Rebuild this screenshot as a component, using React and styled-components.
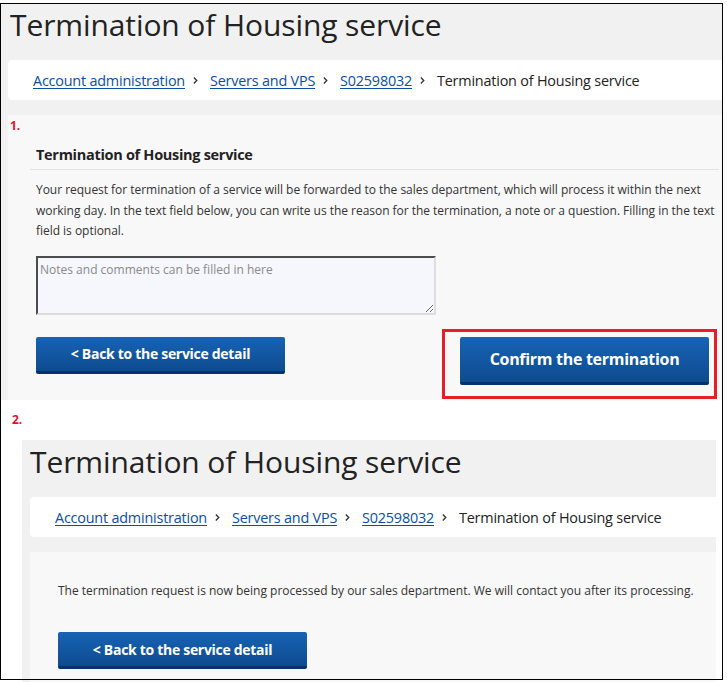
import React from "react";
import styled, { createGlobalStyle } from "styled-components";

const GlobalStyle = createGlobalStyle`
  html, body {
    margin: 0;
    padding: 0;
    background: #fff;
    height: 682px;
    overflow: hidden;
  }
  body {
    font-family: "Open Sans", "Liberation Sans", sans-serif;
    color: #333;
  }
`;

const crumbs = ["Account administration", "Servers and VPS", "S02598032"];

function Breadcrumbs() {
  return (
    <Crumbs>
      {crumbs.map((c) => (
        <React.Fragment key={c}>
          <CrumbLink href="#">{c}</CrumbLink>
          <Chevron viewBox="0 0 6 10">
            <path d="M1 1.5 L4.5 5 L1 8.5" fill="none" stroke="#333" strokeWidth="1.6" />
          </Chevron>
        </React.Fragment>
      ))}
      <CrumbCurrent>Termination of Housing service</CrumbCurrent>
    </Crumbs>
  );
}

export default function App() {
  return (
    <>
      <GlobalStyle />
      <Frame>
        <Panel $top={3} $left={0} $right={0}>
          <Title $indent={2}>Termination of Housing service</Title>
          <Breadcrumbs />
          <Content $height={285}>
            <StepLabel>1.</StepLabel>
            <SectionHead>Termination of Housing service</SectionHead>
            <Paragraph>
              Your request for termination of a service will be forwarded to the sales
              department, which will process it within the next working day. In the text
              field below, you can write us the reason for the termination, a note or a
              question. Filling in the text field is optional.
            </Paragraph>
            <Notes placeholder="Notes and comments can be filled in here" />
            <ButtonRow>
              <BlueButton>&lt; Back to the service detail</BlueButton>
              <Highlight>
                <BlueButton $big>Confirm the termination</BlueButton>
              </Highlight>
            </ButtonRow>
          </Content>
        </Panel>

        <StepTwo>2.</StepTwo>

        <Panel $top={0} $left={22} $right={7}>
          <Title $indent={0}>Termination of Housing service</Title>
          <Breadcrumbs />
          <Content $height={150}>
            <Message>
              The termination request is now being processed by our sales department. We
              will contact you after its processing.
            </Message>
            <BlueButton>&lt; Back to the service detail</BlueButton>
          </Content>
        </Panel>
      </Frame>
    </>
  );
}

const Frame = styled.div`
  position: relative;
  width: 723px;
  height: 677px;
  box-sizing: border-box;

  &::after {
    content: "";
    position: absolute;
    inset: 0;
    border: 1.5px solid #000;
    pointer-events: none;
    z-index: 5;
  }
`;

const Panel = styled.section`
  margin: ${(p) => p.$top}px ${(p) => p.$right}px 0 ${(p) => p.$left}px;
  background: #f1f1f1;
  padding: 0 0 0 8px;
`;

const Title = styled.h1`
  margin: 0;
  padding: 2px 0 0 ${(p) => p.$indent}px;
  height: 57px;
  box-sizing: border-box;
  font-size: 30px;
  font-weight: 400;
  color: #222;
  line-height: 40px;
  letter-spacing: -0.1px;
`;

const Crumbs = styled.nav`
  display: flex;
  align-items: center;
  height: 40px;
  padding-left: 25px;
  background: #fff;
  border-radius: 4px 0 0 4px;
  font-size: 14.4px;
  letter-spacing: -0.2px;
`;

const CrumbLink = styled.a`
  color: #0b4ea2;
  text-decoration: underline;
  text-underline-offset: 2px;
`;

const Chevron = styled.svg`
  width: 5px;
  height: 9px;
  margin: 1px 12px 0 8px;
`;

const CrumbCurrent = styled.span`
  color: #222;
`;

const Content = styled.div`
  position: relative;
  margin-top: 15px;
  height: ${(p) => p.$height}px;
  background: #f8f8f8;
  padding: 30px 4px 0 28px;
  box-sizing: border-box;
`;

const StepLabel = styled.span`
  position: absolute;
  left: 2px;
  top: 2px;
  color: #e8102a;
  font-size: 12px;
  font-weight: 700;
`;

const StepTwo = styled.div`
  padding: 11px 0 0 12px;
  height: 40px;
  box-sizing: border-box;
  color: #e8102a;
  font-size: 12px;
  font-weight: 700;
`;

const SectionHead = styled.h2`
  margin: 0 0 0 -6px;
  padding: 0 0 4px 6px;
  border-bottom: 1px solid #e2e2e2;
  font-size: 14.5px;
  font-weight: 700;
  color: #222;
  letter-spacing: -0.3px;
  line-height: 20px;
`;

const Paragraph = styled.p`
  margin: 10px 0 0 0;
  font-size: 12px;
  line-height: 20.5px;
  color: #333;
  letter-spacing: -0.03px;
`;

const Notes = styled.textarea`
  display: block;
  margin-top: 14px;
  width: 400px;
  height: 59px;
  box-sizing: border-box;
  border: 2px inset #ddd;
  border-top-color: #a0a0a0;
  border-left-color: #a0a0a0;
  background: #f5f7fc;
  font-family: "Open Sans", "Liberation Sans", sans-serif;
  font-size: 12px;
  padding: 3px 2px;
  resize: both;

  &::placeholder {
    color: #8a8a8a;
  }
`;

const ButtonRow = styled.div`
  display: flex;
  justify-content: space-between;
  align-items: flex-start;
  margin-top: 22px;
  padding-right: 2px;
`;

const Highlight = styled.div`
  margin-top: -8px;
  padding: 5px 5px 11px 15px;
  border: 3px solid #e81e25;
`;

const BlueButton = styled.button`
  display: block;
  width: 249px;
  height: ${(p) => (p.$big ? 48 : 37)}px;
  border: none;
  border-bottom: 3px solid #06326a;
  border-radius: 2px;
  background: linear-gradient(#1763b5, #0e4b8f);
  color: #fff;
  font-family: "Open Sans", "Liberation Sans", sans-serif;
  font-size: ${(p) => (p.$big ? 16 : 14)}px;
  font-weight: 700;
  letter-spacing: -0.3px;
  padding: 0;
  cursor: pointer;
`;

const Message = styled.p`
  margin: 0 0 33px 0;
  font-size: 12px;
  line-height: 17px;
  color: #333;
`;
